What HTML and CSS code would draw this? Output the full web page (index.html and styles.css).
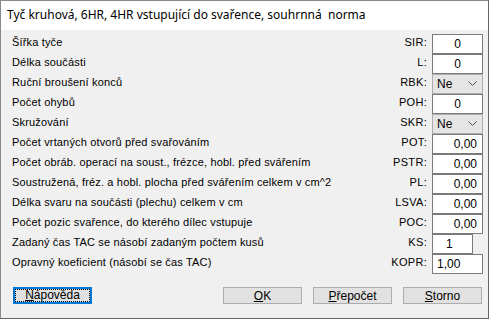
FILE: index.html
```html
<!DOCTYPE html>
<html lang="cs">
<head>
    <meta charset="UTF-8" />
    <title>Tyč kruhová</title>
    <link rel="stylesheet" href="styles.css">
</head>
<body>
    <div class="window">
        <div class="titlebar">Tyč kruhová, 6HR, 4HR vstupující do svařence, souhrnná&nbsp; norma</div>
        <div class="content">
            <div class="form-grid">
                <span class="label">Šířka tyče</span>
                <span class="code">SIR:</span>
                <span class="field center">0</span>

                <span class="label">Délka součásti</span>
                <span class="code">L:</span>
                <span class="field center">0</span>

                <span class="label">Ruční broušení konců</span>
                <span class="code">RBK:</span>
                <span class="combo">Ne <svg width="9" height="6" viewBox="0 0 9 6"><polyline points="0.5,0.5 4.5,4.5 8.5,0.5" fill="none" stroke="#555" stroke-width="1"/></svg></span>

                <span class="label">Počet ohybů</span>
                <span class="code">POH:</span>
                <span class="field center">0</span>

                <span class="label">Skružování</span>
                <span class="code">SKR:</span>
                <span class="combo">Ne <svg width="9" height="6" viewBox="0 0 9 6"><polyline points="0.5,0.5 4.5,4.5 8.5,0.5" fill="none" stroke="#555" stroke-width="1"/></svg></span>

                <span class="label">Počet vrtaných otvorů před svařováním</span>
                <span class="code">POT:</span>
                <span class="field right">0,00</span>

                <span class="label">Počet obráb. operací na soust., frézce, hobl. před svářením</span>
                <span class="code">PSTR:</span>
                <span class="field right">0,00</span>

                <span class="label">Soustružená, fréz. a hobl. plocha před svářením celkem v cm^2</span>
                <span class="code">PL:</span>
                <span class="field right">0,00</span>

                <span class="label">Délka svaru na součásti (plechu) celkem v cm</span>
                <span class="code">LSVA:</span>
                <span class="field right">0,00</span>

                <span class="label">Počet pozic svařence, do kterého dílec vstupuje</span>
                <span class="code">POC:</span>
                <span class="field right">0,00</span>

                <span class="label">Zadaný čas TAC se násobí zadaným počtem kusů</span>
                <span class="code">KS:</span>
                <span class="field short">1</span>

                <span class="label">Opravný koeficient (násobí se čas TAC)</span>
                <span class="code">KOPR:</span>
                <span class="field left">1,00</span>
            </div>
            <div class="buttons">
                <button class="btn focused"><span class="focus-ring"><u>N</u>ápověda</span></button>
                <button class="btn push-right"><u>O</u>K</button>
                <button class="btn"><u>P</u>řepočet</button>
                <button class="btn"><u>S</u>torno</button>
            </div>
        </div>
    </div>
</body>
</html>
```
FILE: styles.css
```css
html, body {
    margin: 0;
    padding: 0;
}
body {
    background-color: #f0f0f0;
    font-family: 'Liberation Sans', Arial, sans-serif;
    font-size: 11px;
    color: #000;
}
.window {
    width: 489px;
    height: 319px;
    box-sizing: border-box;
    border: 1px solid #8a8a8a;
    border-right-color: #646464;
    border-bottom-color: #646464;
    background-color: #f0f0f0;
}
.titlebar {
    height: 29px;
    line-height: 27px;
    padding-left: 6px;
    background-color: #fff;
    font-family: 'Noto Sans', sans-serif;
    font-size: 12px;
    white-space: nowrap;
}
.content {
    padding: 4px 5px 0 11px;
}
.form-grid {
    display: grid;
    grid-template-columns: 1fr auto 51px;
    grid-auto-rows: 20px;
    column-gap: 5px;
    align-items: center;
}
.label {
    white-space: nowrap;
    margin-top: -4px;
    letter-spacing: 0.16px;
}
.code {
    text-align: right;
    margin-top: -4px;
    letter-spacing: 0.3px;
}
.field {
    display: block;
    box-sizing: border-box;
    height: 20px;
    line-height: 18px;
    border: 1px solid #7a7a7a;
    background-color: #fff;
    font-size: 12px;
    padding: 0 5px;
}
.center { text-align: center; }
.right { text-align: right; }
.left { text-align: left; padding-left: 4px; }
.short {
    width: 41px;
    padding-left: 13px;
}
.combo {
    display: flex;
    justify-content: space-between;
    align-items: center;
    box-sizing: border-box;
    height: 20px;
    border: 1px solid #adadad;
    background-color: #e5e5e5;
    padding: 0 5px 0 4px;
    font-size: 12px;
}
.buttons {
    display: flex;
    gap: 11px;
    margin-top: 13px;
    padding-left: 1px;
    padding-right: 1px;
}
.btn {
    width: 79px;
    height: 17px;
    padding: 0;
    box-sizing: border-box;
    border: 1px solid #adadad;
    background-color: #e1e1e1;
    font-family: 'Liberation Sans', Arial, sans-serif;
    font-size: 12px;
    color: #000;
    line-height: 14px;
}
.push-right { margin-left: auto; }
.focused {
    border: 2px solid #0078d7;
    padding: 0;
}
.focus-ring {
    display: block;
    margin: 0;
    height: 11px;
    line-height: 11px;
    border: 1px dotted #000;
}
```
